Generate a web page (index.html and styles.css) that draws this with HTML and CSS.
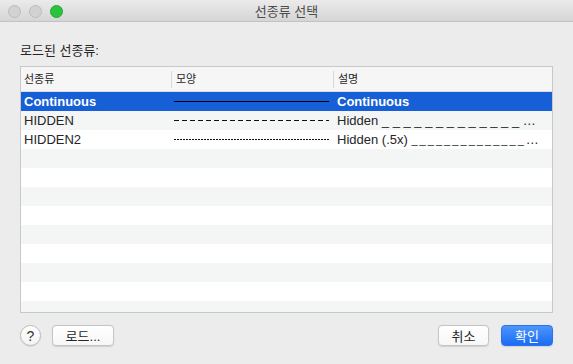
FILE: index.html
```html
<!DOCTYPE html>
<html lang="ko">
<head>
  <meta charset="UTF-8">
  <meta name="viewport" content="width=device-width, initial-scale=1.0">
  <title>선종류 선택</title>
  <link rel="stylesheet" href="styles.css">
</head>
<body>
  <div class="window">
    <div class="titlebar">
      <div class="lights">
        <span class="light"></span>
        <span class="light"></span>
        <span class="light green"></span>
      </div>
      <div class="title">선종류 선택</div>
      <div></div>
    </div>

    <div class="content">
      <div class="caption">로드된 선종류:</div>

      <div class="table">
        <div class="row head">
          <div class="cell c1">선종류</div>
          <div class="cell c2">모양</div>
          <div class="cell c3">설명</div>
        </div>
        <div class="rows">
          <div class="row selected">
            <div class="cell c1">Continuous</div>
            <div class="cell c2"><span class="line solid"></span></div>
            <div class="cell c3">Continuous</div>
          </div>
          <div class="row">
            <div class="cell c1">HIDDEN</div>
            <div class="cell c2"><span class="line dashed"></span></div>
            <div class="cell c3">Hidden _ _ _ _ _ _ _ _ _ _ _ _ _ _ _ _ _ _ _ _ _ _</div>
          </div>
          <div class="row">
            <div class="cell c1">HIDDEN2</div>
            <div class="cell c2"><span class="line dotted"></span></div>
            <div class="cell c3">Hidden (.5x) <span class="small">_ _ _ _ _ _ _ _ _ _ _ _ _ _ _ _ _ _ _ _ _ _</span></div>
          </div>
          <div class="row"></div>
          <div class="row"></div>
          <div class="row"></div>
          <div class="row"></div>
          <div class="row"></div>
          <div class="row"></div>
          <div class="row"></div>
          <div class="row"></div>
          <div class="row"></div>
        </div>
      </div>

      <div class="buttons">
        <button class="help">?</button>
        <button class="btn load">로드...</button>
        <div class="spacer"></div>
        <button class="btn cancel">취소</button>
        <button class="btn primary">확인</button>
      </div>
    </div>
  </div>
</body>
</html>
```

FILE: styles.css
```css
body {
  margin: 0;
  padding: 0;
  font-family: 'Liberation Sans', 'Noto Sans CJK KR', sans-serif;
  background-color: #ececec;
  color: #262626;
}
.window {
  width: 573px;
  height: 364px;
  display: flex;
  flex-direction: column;
  background-color: #ececec;
  overflow: hidden;
}

/* Barra de titulo */
.titlebar {
  height: 21px;
  flex: none;
  display: grid;
  grid-template-columns: 1fr auto 1fr;
  align-items: center;
  background: linear-gradient(#ebebeb, #d5d5d5);
  border-bottom: 1px solid #c2c2c2;
}
.lights {
  display: flex;
  gap: 8px;
  padding-left: 8px;
  padding-top: 1px;
}
.light {
  width: 11px;
  height: 11px;
  border-radius: 50%;
  background-color: #d2d2d2;
  border: 0.5px solid #bcbcbc;
}
.light.green {
  background-color: #29c33f;
  border-color: #22a833;
}
.title {
  font-size: 13px;
  color: #4d4d4d;
}

.content {
  flex: 1;
  display: flex;
  flex-direction: column;
  padding: 0 20px;
}
.caption {
  font-size: 13px;
  line-height: 16px;
  margin-top: 21px;
  margin-bottom: 7px;
}

/* Tabela */
.table {
  height: 245px;
  border: 1px solid #c8c8c8;
  background-color: #ffffff;
  display: flex;
  flex-direction: column;
  overflow: hidden;
}
.row {
  display: flex;
  height: 19px;
  align-items: center;
  font-size: 13px;
  flex: none;
}
.rows .row:nth-child(even) {
  background-color: #f4f5f5;
}
.row.head {
  height: 24px;
  background-color: #f6f6f6;
  border-bottom: 1px solid #dcdcdc;
  font-size: 11px;
  color: #262626;
}
.cell {
  white-space: nowrap;
  overflow: hidden;
  text-overflow: ellipsis;
  box-sizing: border-box;
}
.c1 {
  width: 150px;
  padding-left: 3px;
}
.c2 {
  width: 162px;
  padding: 0 4px 0 3px;
  display: flex;
  align-items: center;
}
.c3 {
  flex: 1;
  padding: 0 10px 0 4px;
}
.head .cell {
  height: 17px;
  line-height: 17px;
}
.head .c2,
.head .c3 {
  border-left: 1px solid #d9d9d9;
}
.head .c2 {
  padding-left: 4px;
}
.row.selected {
  background-color: #165fd6;
  color: #ffffff;
  font-weight: bold;
}
.line {
  display: block;
  width: 100%;
  height: 1px;
}
.line.solid {
  background-color: #000000;
}
.line.dashed {
  background: repeating-linear-gradient(90deg, #111 0 5px, transparent 5px 8px);
}
.line.dotted {
  background: repeating-linear-gradient(90deg, #111 0 2px, transparent 2px 3px);
}
.small {
  font-size: 11px;
  letter-spacing: -0.5px;
}

/* Botoes */
.buttons {
  display: flex;
  align-items: center;
  margin-top: 12px;
  gap: 12px;
}
.spacer {
  flex: 1;
}
button {
  font-family: 'Liberation Sans', 'Noto Sans CJK KR', sans-serif;
  font-size: 13px;
  cursor: pointer;
}
.help {
  width: 21px;
  height: 21px;
  padding: 0;
  border-radius: 50%;
  border: 1px solid #bdbdbd;
  background: linear-gradient(#ffffff, #f3f3f3);
  color: #333;
  font-size: 14px;
  margin-right: -1px;
  box-shadow: 0 0.5px 1px rgba(0, 0, 0, 0.15);
}
.btn {
  height: 21px;
  padding: 0;
  border-radius: 4px;
  border: 1px solid #c4c4c4;
  background: linear-gradient(#ffffff, #f7f7f7);
  color: #262626;
  box-shadow: 0 0.5px 1px rgba(0, 0, 0, 0.12);
}
.load {
  width: 62px;
}
.cancel {
  width: 51px;
}
.primary {
  width: 52px;
  border-color: #2a72ee;
  background: linear-gradient(#4d95fd, #1a6cf3);
  color: #ffffff;
}
```
